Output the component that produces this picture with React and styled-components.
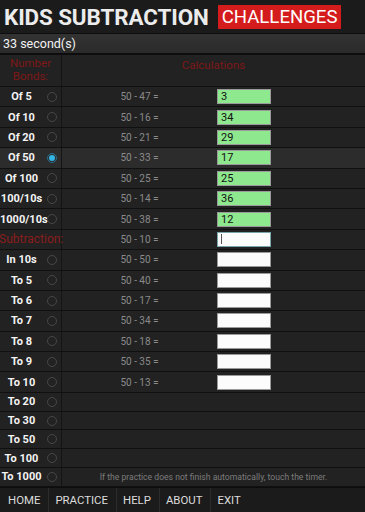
import React from "react";
import styled, { createGlobalStyle } from "styled-components";

const Global = createGlobalStyle`
  html, body { margin: 0; padding: 0; background: #1c1c1c; }
  body { font-family: Roboto, "Noto Sans", sans-serif; width: 365px; height: 512px; overflow: hidden; }
`;

const Page = styled.div`
  width: 365px;
  height: 512px;
  display: flex;
  flex-direction: column;
  background: #1e1e1e;
`;

const TitleBar = styled.div`
  height: 33px;
  display: flex;
  align-items: center;
  gap: 9px;
  padding-left: 4px;
  background: #1b1b1b;
  box-sizing: border-box;
`;

const Title = styled.span`
  color: #ececec;
  font-size: 22.4px;
  font-weight: 700;
  letter-spacing: -0.1px;
`;

const Badge = styled.span`
  background: #d51c1c;
  color: #fff;
  font-size: 18.6px;
  line-height: 24px;
  padding: 0 4px;
  margin-top: 1px;
`;

const TimerBar = styled.div`
  height: 19px;
  display: flex;
  align-items: center;
  padding-left: 3px;
  color: #f2f2f2;
  font-size: 12.5px;
  background: linear-gradient(#333 0%, #2a2a2a 100%);
  border-top: 1px solid #0d0d0d;
  border-bottom: 2px solid #0d0d0d;
`;

const Table = styled.div`
  display: flex;
  flex-direction: column;
`;

const Row = styled.div`
  display: grid;
  grid-template-columns: 62px 1fr;
  height: ${(p) => p.$h}px;
  box-sizing: border-box;
  border-bottom: 1px solid #101010;
  background: ${(p) => (p.$selected ? "#2c2c2c" : "#222222")};
`;

const LeftCell = styled.div`
  display: flex;
  align-items: center;
  border-right: 1px solid #141414;
`;

const HeaderLeft = styled.div`
  display: flex;
  flex-direction: column;
  align-items: center;
  justify-content: center;
  border-right: 1px solid #141414;
  color: #7e1818;
  font-size: 11.5px;
  line-height: 13px;
  padding-bottom: 2px;
`;

const HeaderRight = styled.div`
  display: flex;
  justify-content: center;
  padding-top: 3px;
  color: #7e1818;
  font-size: 11.5px;
`;

const Label = styled.span`
  width: 43px;
  text-align: center;
  color: #f4f4f4;
  font-weight: 700;
  font-size: 11px;
  white-space: nowrap;
`;

const SectionLabel = styled.span`
  color: #8a1c1c;
  font-size: 12px;
  white-space: nowrap;
  margin-left: -1px;
`;

const Radio = styled.span`
  width: 10px;
  height: 10px;
  margin-left: 4px;
  box-sizing: border-box;
  border-radius: 50%;
  border: 1.3px solid ${(p) => (p.$on ? "#2a6d8a" : "#474747")};
  display: flex;
  align-items: center;
  justify-content: center;
  &::after {
    content: "";
    width: 6px;
    height: 6px;
    border-radius: 50%;
    background: ${(p) => (p.$on ? "#33b5e5" : "transparent")};
  }
`;

const RightCell = styled.div`
  display: flex;
  align-items: center;
`;

const Calc = styled.span`
  width: 155px;
  text-align: center;
  color: #8a8a8a;
  font-size: 10px;
  white-space: nowrap;
`;

const Answer = styled.div`
  width: 54px;
  height: 15px;
  box-sizing: border-box;
  border: 1px solid ${(p) => (p.$focus ? "#7aa6ad" : "#9a9a9a")};
  background: ${(p) => (p.$filled ? "#8ee88e" : "#fcfcfc")};
  color: #111;
  font-size: 11px;
  line-height: 13px;
  padding-left: 3px;
  display: flex;
  align-items: center;
`;

const Caret = styled.span`
  width: 1px;
  height: 10px;
  background: #555;
`;

const Note = styled.span`
  flex: 1;
  text-align: center;
  color: #7c7c7c;
  font-size: 8.6px;
  white-space: nowrap;
`;

const Nav = styled.div`
  flex: 1;
  display: flex;
  align-items: center;
  background: #1b1b1b;
  border-top: 1px solid #0d0d0d;
`;

const NavItem = styled.span`
  color: #dcdcdc;
  font-size: 11.4px;
  padding: 0 8px 0 ${(p) => (p.$first ? 8 : 6)}px;
  height: 100%;
  display: flex;
  align-items: center;
  border-left: ${(p) => (p.$first ? "none" : "1px solid #2c2c2c")};
`;

const rows = [
  { label: "Of 5", calc: "50 - 47 =", ans: "3" },
  { label: "Of 10", calc: "50 - 16 =", ans: "34" },
  { label: "Of 20", calc: "50 - 21 =", ans: "29" },
  { label: "Of 50", calc: "50 - 33 =", ans: "17", selected: true },
  { label: "Of 100", calc: "50 - 25 =", ans: "25" },
  { label: "100/10s", calc: "50 - 14 =", ans: "36" },
  { label: "1000/10s", calc: "50 - 38 =", ans: "12" },
  { section: "Subtraction:", calc: "50 - 10 =", ans: "", focus: true },
  { label: "In 10s", calc: "50 - 50 =", ans: "" },
  { label: "To 5", calc: "50 - 40 =", ans: "" },
  { label: "To 6", calc: "50 - 17 =", ans: "" },
  { label: "To 7", calc: "50 - 34 =", ans: "" },
  { label: "To 8", calc: "50 - 18 =", ans: "" },
  { label: "To 9", calc: "50 - 35 =", ans: "" },
  { label: "To 10", calc: "50 - 13 =", ans: "" },
  { label: "To 20" },
  { label: "To 30" },
  { label: "To 50" },
  { label: "To 100" },
  { label: "To 1000", note: "If the practice does not finish automatically, touch the timer." },
];

export default function App() {
  return (
    <Page>
      <Global />
      <TitleBar>
        <Title>KIDS SUBTRACTION</Title>
        <Badge>CHALLENGES</Badge>
      </TitleBar>
      <TimerBar>33 second(s)</TimerBar>
      <Table>
        <Row $h={32}>
          <HeaderLeft>
            <span>Number</span>
            <span>Bonds:</span>
          </HeaderLeft>
          <HeaderRight>Calculations</HeaderRight>
        </Row>
        {rows.map((r, i) => (
          <Row key={i} $h={i < 15 ? 20.4 : 18.8} $selected={r.selected}>
            <LeftCell>
              {r.section ? (
                <SectionLabel>{r.section}</SectionLabel>
              ) : (
                <>
                  <Label>{r.label}</Label>
                  <Radio $on={r.selected} />
                </>
              )}
            </LeftCell>
            <RightCell>
              {r.calc && (
                <>
                  <Calc>{r.calc}</Calc>
                  <Answer $filled={!!r.ans} $focus={r.focus}>
                    {r.focus ? <Caret /> : r.ans}
                  </Answer>
                </>
              )}
              {r.note && <Note>{r.note}</Note>}
            </RightCell>
          </Row>
        ))}
      </Table>
      <Nav>
        <NavItem $first>HOME</NavItem>
        <NavItem>PRACTICE</NavItem>
        <NavItem>HELP</NavItem>
        <NavItem>ABOUT</NavItem>
        <NavItem>EXIT</NavItem>
      </Nav>
    </Page>
  );
}
